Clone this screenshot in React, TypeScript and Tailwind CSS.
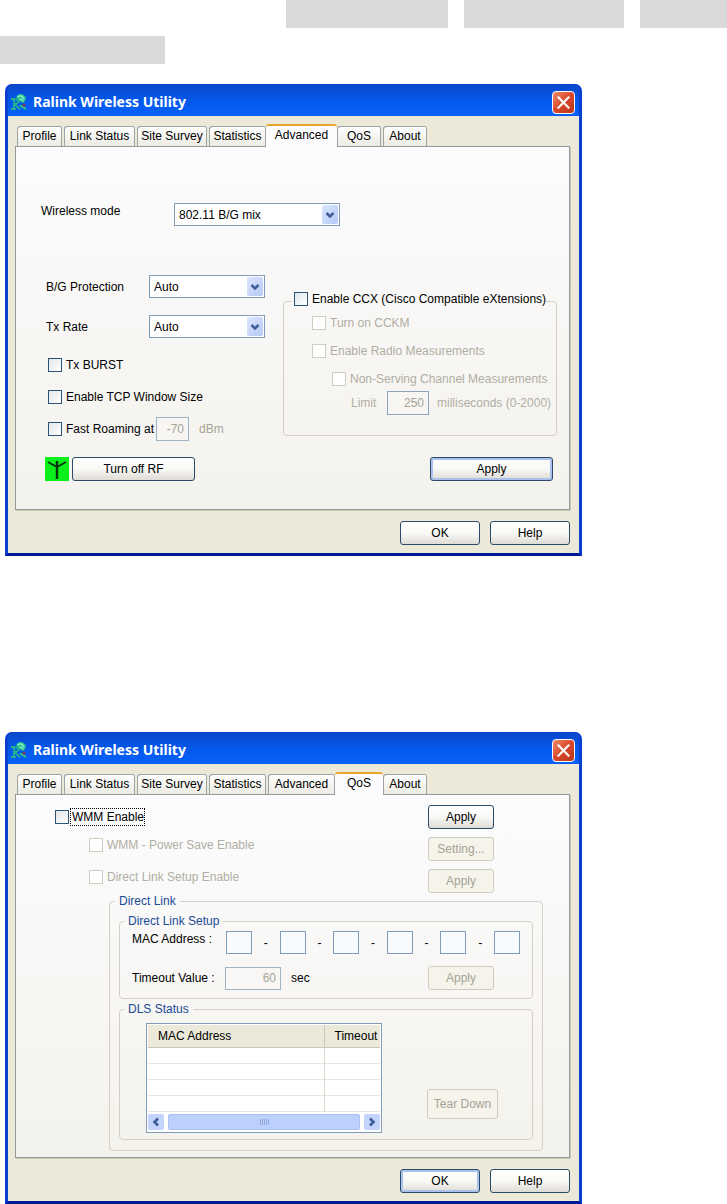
import { useId, type ReactNode } from "react";
import clsx from "clsx";

const TABS = [
  { name: "Profile", width: "w-[45px]" },
  { name: "Link Status", width: "w-[71px]" },
  { name: "Site Survey", width: "w-[70px]" },
  { name: "Statistics", width: "w-[57px]" },
  { name: "Advanced", width: "w-[67px]" },
  { name: "QoS", width: "w-[44px]" },
  { name: "About", width: "w-[44px]" },
];

function RalinkIcon() {
  return (
    <svg width="18" height="18" viewBox="0 0 18 18" fill="none" aria-hidden="true">
      <path d="M1 6h3v10M1 16h5M4 6.500c5-1.500 6 3.500 1 4.500M5 11l5 5.500" stroke="#22b48c" strokeWidth="1.8" />
      <path d="M6 4C8 0 14 0 16 5L14 10L10 9Z" fill="#25c08e" />
      <path d="M8 4c2-2 5-1 6 2M10 6.500c1-1 2 0 3 1" stroke="#9af0d0" strokeWidth="1.2" strokeLinecap="round" />
      <path d="M10 12.500l6 3.500" stroke="#35c878" strokeWidth="2" />
      <circle cx="14" cy="12" r="1.6" fill="#7a3a5a" />
    </svg>
  );
}

function Chevron({ className }: { className?: string }) {
  return (
    <svg width="10" height="10" viewBox="0 0 10 10" fill="none" className={className} aria-hidden="true">
      <path d="M1.5 3L5 6.5L8.5 3" stroke="#3f5f99" strokeWidth="2.6" />
    </svg>
  );
}

function Button({
  children,
  className,
  disabled,
  focused,
}: {
  children: ReactNode;
  className?: string;
  disabled?: boolean;
  focused?: boolean;
}) {
  return (
    <button
      type="button"
      disabled={disabled}
      className={clsx(
        "shrink-0 rounded-[3px] border text-center",
        disabled
          ? "border-[#cfccbf] bg-[#f5f3ea] text-[#a5a395]"
          : "border-[#2c4a66] bg-linear-to-b from-white via-[#f8f8f6] to-[#dedcd4] text-black",
        focused && "shadow-[inset_0_0_0_2px_#a9c1ec]",
        className
      )}
    >
      {children}
    </button>
  );
}

function Check({
  label,
  disabled,
  focused,
  className,
}: {
  label: string;
  disabled?: boolean;
  focused?: boolean;
  className?: string;
}) {
  return (
    <label className={clsx("flex items-center gap-1 whitespace-nowrap", disabled && "text-[#b0aea2]", className)}>
      <input
        type="checkbox"
        disabled={disabled}
        className={clsx(
          "size-3.5 shrink-0 appearance-none border",
          disabled ? "border-[#cfccc0] bg-white" : "border-[#2c5478] bg-linear-to-br from-[#dfe6ea] to-white"
        )}
      />
      <span className={clsx(focused && "-ml-0.5 pl-px outline-1 outline-dotted outline-black")}>{label}</span>
    </label>
  );
}

function Select({ id, value, className }: { id: string; value: string; className: string }) {
  return (
    <div className={clsx("relative h-[23px] shrink-0", className)}>
      <select id={id} className="size-full appearance-none border border-[#7f9db9] bg-white pl-1 text-black">
        <option>{value}</option>
      </select>
      <span className="pointer-events-none absolute inset-y-0.5 right-0.5 flex w-4 items-center justify-center rounded-xs bg-linear-to-br from-[#dbe6fd] to-[#b5c9f5]">
        <Chevron />
      </span>
    </div>
  );
}

const groupStyle = "min-w-0 rounded-[4px] border border-[#d3d1c6]";

function UtilityWindow({ active, children, okFocused }: { active: string; children: ReactNode; okFocused?: boolean }) {
  return (
    <section className="flex flex-col overflow-hidden rounded-t-[7px] border-x-[3px] border-b-[3px] border-x-[#0a3fd0] border-b-[#001a9a] bg-[#0a55e6]">
      {/* Title bar */}
      <header className="flex h-8 items-center bg-linear-to-b from-[#0a45c8] via-[#0458ea] to-[#0560fa] pt-1 pr-1 pl-0.5">
        <RalinkIcon />
        <h2 className="flex-1 pl-[5px] font-['Noto_Sans',sans-serif] text-sm font-bold text-white">
          Ralink Wireless Utility
        </h2>
        <button
          type="button"
          aria-label="Close"
          className="flex size-[23px] items-center justify-center rounded-[4px] border border-white bg-linear-to-br from-[#ec8a68] via-[#d9482a] to-[#b8351c]"
        >
          <svg width="15" height="15" viewBox="0 0 13 13" stroke="#fff" strokeWidth="1.8" strokeLinecap="round">
            <path d="M2 2l9 9M11 2l-9 9" />
          </svg>
        </button>
      </header>

      <div className="bg-[#ece9d8] pt-2 pr-[9px] pb-2 pl-[7px]">
        {/* Tabs */}
        <div role="tablist" className="flex h-[22px] items-end gap-0.5 pl-0.5">
          {TABS.map((t) => (
            <button
              key={t.name}
              type="button"
              role="tab"
              aria-selected={t.name === active}
              className={clsx(
                "box-content shrink-0 rounded-t-[3px] whitespace-nowrap text-center",
                t.width,
                t.name === active
                  ? "z-10 -mx-0.5 -mb-px h-[17px] border-t-2 border-t-[#e9a52e] bg-[#fcfcfe] px-0.5 pb-1 leading-4"
                  : "h-5 bg-linear-to-b from-white to-[#ecebe4] shadow-[inset_1px_1px_0_#9aa5a5,inset_-1px_0_0_#9aa5a5]"
              )}
            >
              {t.name}
            </button>
          ))}
        </div>

        <div
          role="tabpanel"
          className="min-h-[364px] border border-[#919b9c] bg-linear-to-b from-[#fcfcfe] to-[#f4f2ec] shadow-[1px_1px_0_#c9c7ba]"
        >
          {children}
        </div>

        <footer className="flex justify-end gap-2.5 pt-[11px]">
          <Button className="h-6 w-20" focused={okFocused}>
            OK
          </Button>
          <Button className="h-6 w-20">Help</Button>
        </footer>
      </div>
    </section>
  );
}

function AdvancedPanel() {
  const id = useId();
  return (
    <div className="pt-14 pr-3">
      <div className="flex items-start pl-[25px]">
        <label htmlFor={id + "mode"} className="w-[133px] leading-4">
          Wireless mode
        </label>
        <Select id={id + "mode"} value="802.11 B/G mix" className="w-[166px]" />
      </div>

      <div className="flex justify-between pt-[49px]">
        {/* Radio settings */}
        <div className="flex flex-col pl-[30px]">
          <div className="flex items-center">
            <label htmlFor={id + "prot"} className="w-[103px]">
              B/G Protection
            </label>
            <Select id={id + "prot"} value="Auto" className="w-[116px]" />
          </div>
          <div className="flex items-center pt-[17px]">
            <label htmlFor={id + "rate"} className="w-[103px]">
              Tx Rate
            </label>
            <Select id={id + "rate"} value="Auto" className="w-[116px]" />
          </div>
          <div className="flex flex-col gap-2 pt-[15px] pl-0.5">
            <Check label="Tx BURST" className="h-6" />
            <Check label="Enable TCP Window Size" className="h-6" />
            <div className="flex h-6 items-center">
              <Check label="Fast Roaming at" />
              <input
                aria-label="Roaming threshold in dBm"
                disabled
                defaultValue="-70"
                className="ml-0.5 h-6 w-[33px] border border-[#9db3c8] bg-[#f7f6f3] pr-1 text-right text-[#a5a395]"
              />
              <span className="pl-2.5 text-[#a5a395]">dBm</span>
            </div>
          </div>
        </div>

        {/* Cisco extensions */}
        <fieldset className={clsx(groupStyle, "mt-4 w-[274px] self-start pb-5")}>
          <legend className="ml-2 h-5 pl-0.5">
            <Check label="Enable CCX (Cisco Compatible eXtensions)" className="h-4" />
          </legend>
          <div className="flex flex-col gap-3 pt-1 pl-7">
            <Check label="Turn on CCKM" disabled className="h-4" />
            <Check label="Enable Radio Measurements" disabled className="h-4" />
            <Check label="Non-Serving Channel Measurements" disabled className="h-4 pl-5" />
          </div>
          <div className="flex items-center pt-1 pl-[67px] text-[#b0aea2]">
            <label htmlFor={id + "limit"} className="w-9">
              Limit
            </label>
            <input
              id={id + "limit"}
              disabled
              defaultValue="250"
              className="h-6 w-[42px] border border-[#8ea6bd] bg-[#f7f6f3] pr-1 text-right text-[#a5a395]"
            />
            <span className="pl-2 whitespace-nowrap">milliseconds (0-2000)</span>
          </div>
        </fieldset>
      </div>

      <div className="flex items-center pt-4 pr-1 pl-[29px]">
        <svg width="24" height="24" viewBox="0 0 24 24" className="bg-[#0bf01b]" fill="none" stroke="#05320a" aria-hidden="true">
          <path d="M12 4v18" strokeWidth="2.4" />
          <path d="M3 5l9 5l9-5" strokeWidth="1.8" />
        </svg>
        <Button className="ml-[3px] h-6 w-[123px]">Turn off RF</Button>
        <Button className="ml-auto h-6 w-[123px]" focused>
          Apply
        </Button>
      </div>
    </div>
  );
}

function DirectLink() {
  const id = useId();
  return (
    <fieldset className={clsx(groupStyle, "mr-[26px] ml-[93px] px-[9px] pb-2.5")}>
      <legend className="-ml-1 px-1 leading-4 text-[#1b4a96]">Direct Link</legend>

      <fieldset className={clsx(groupStyle, "mt-1 pr-3 pb-2 pl-3")}>
        <legend className="-ml-2 px-1 leading-4 text-[#1b4a96]">Direct Link Setup</legend>
        <div className="flex h-[23px] items-start pt-0.5">
          <span className="w-[94px] leading-4">MAC Address :</span>
          <div className="flex flex-1 items-center justify-between">
            {[1, 2, 3, 4, 5, 6].map((n) => (
              <div key={n} className="contents">
                {n > 1 && <span className="leading-4">-</span>}
                <input
                  aria-label={`MAC address byte ${n}`}
                  disabled
                  className="h-[23px] w-[26px] border border-[#7f9db9] bg-[#f8fbfd]"
                />
              </div>
            ))}
          </div>
        </div>
        <div className="flex items-center pt-3.5">
          <label htmlFor={id} className="w-[93px]">
            Timeout Value :
          </label>
          <input
            id={id}
            disabled
            defaultValue="60"
            className="h-[23px] w-14 border border-[#9db3c8] bg-[#f8f7f5] pr-1 text-right text-[#a5a395]"
          />
          <span className="pl-2.5">sec</span>
          <Button disabled className="mr-[26px] ml-auto h-6 w-[66px]">
            Apply
          </Button>
        </div>
      </fieldset>

      <fieldset className={clsx(groupStyle, "mt-0.5 pl-[26px]")}>
        <legend className="-ml-[22px] px-1 leading-4 text-[#1b4a96]">DLS Status</legend>
        <div className="flex items-end justify-between pt-1.5 pr-[34px] pb-1.5">
          <div className="w-[236px] border border-[#7f9db9] bg-white p-px">
            <table className="w-full table-fixed border-collapse text-left">
              <thead>
                <tr className="h-[22px] bg-[#ebe9da]">
                  <th className="w-[176px] border-r border-b border-[#cbc8b8] pl-2.5 font-normal">MAC Address</th>
                  <th className="border-b border-[#cbc8b8] pl-2.5 font-normal">Timeout</th>
                </tr>
              </thead>
              <tbody>
                {[1, 2, 3, 4].map((row) => (
                  <tr key={row} className="h-4 border-b border-[#e6e4dc]">
                    <td className="border-r border-[#dcdacb]" />
                    <td />
                  </tr>
                ))}
              </tbody>
            </table>
            {/* Horizontal scrollbar */}
            <div className="flex h-[19px] items-center gap-1 pt-0.5">
              <button type="button" aria-label="Scroll left" className="flex size-4 items-center justify-center rounded-xs bg-[#c3d3fb]">
                <Chevron className="rotate-90" />
              </button>
              <div className="flex h-4 flex-1 items-center justify-center gap-px rounded-xs border border-[#a9c0f5] bg-[#bdd0fc]">
                {[1, 2, 3, 4, 5].map((grip) => (
                  <span key={grip} className="h-1.5 w-px bg-[#8fa9e0]" />
                ))}
              </div>
              <button type="button" aria-label="Scroll right" className="flex size-4 items-center justify-center rounded-xs bg-[#c3d3fb]">
                <Chevron className="-rotate-90" />
              </button>
            </div>
          </div>
          <Button disabled className="mb-3.5 h-[30px] w-[71px]">
            Tear Down
          </Button>
        </div>
      </fieldset>
    </fieldset>
  );
}

function QosPanel() {
  return (
    <div className="pt-2.5">
      <div className="flex flex-col gap-2 pr-[75px] pl-[39px]">
        <div className="flex items-center justify-between">
          <Check label="WMM Enable" focused />
          <Button className="h-6 w-[66px]">Apply</Button>
        </div>
        <div className="flex items-start justify-between pl-[34px]">
          <Check label="WMM - Power Save Enable" disabled />
          <Button disabled className="h-6 w-[66px]">
            Setting...
          </Button>
        </div>
        <div className="flex items-start justify-between pl-[34px]">
          <Check label="Direct Link Setup Enable" disabled />
          <Button disabled className="h-6 w-[66px]">
            Apply
          </Button>
        </div>
      </div>
      <DirectLink />
    </div>
  );
}

export default function App() {
  return (
    <main className="min-h-screen bg-white font-['Liberation_Sans',Arial,sans-serif] text-xs text-black">
      {/* Blanked-out text lines */}
      <div className="flex gap-4">
        <div className="h-7 w-[270px]" />
        <div className="h-7 w-[162px] bg-[#d9d9d9]" />
        <div className="h-7 w-40 bg-[#d9d9d9]" />
        <div className="h-7 flex-1 bg-[#d9d9d9]" />
      </div>
      <div className="mt-2 h-7 w-[165px] bg-[#d9d9d9]" />

      <div className="flex max-w-[582px] flex-col gap-44 pt-5 pl-[5px]">
        <UtilityWindow active="Advanced">
          <AdvancedPanel />
        </UtilityWindow>
        <UtilityWindow active="QoS" okFocused>
          <QosPanel />
        </UtilityWindow>
      </div>
    </main>
  );
}
